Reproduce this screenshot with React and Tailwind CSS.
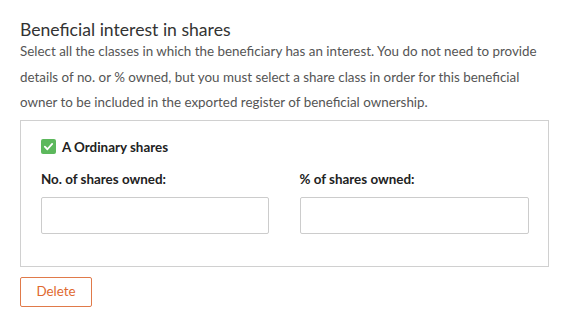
import { useState } from "react";

const App = () => {
  const [checked, setChecked] = useState(true);

  return (
    <div className="min-h-screen bg-white px-5 pt-[18px] font-['Lato',sans-serif] text-[#333]">
      <h2 className="text-[17.6px] leading-[24px] text-[#333]">Beneficial interest in shares</h2>
      <p className="-mt-[3px] text-[13.4px] leading-[25.5px] text-[#555] w-[520px]">
        Select all the classes in which the beneficiary has an interest. You do not need to provide
        details of no. or % owned, but you must select a share class in order for this beneficial
        owner to be included in the exported register of beneficial ownership.
      </p>

      <div className="mt-[4px] w-[529px] h-[147px] border border-[#d0d0d0] pl-5 pr-5 pt-[16px]">
        <label className="flex items-center gap-[6px] cursor-pointer">
          <button
            type="button"
            onClick={() => setChecked(!checked)}
            className="w-[15px] h-[15px] rounded-[2px] bg-[#5cb85c] flex items-center justify-center"
          >
            {checked && (
              <svg width="11" height="11" viewBox="0 0 12 12" fill="none">
                <path d="M2 6.2 L4.8 9 L10 3.2" stroke="white" strokeWidth="2" strokeLinecap="round" strokeLinejoin="round" />
              </svg>
            )}
          </button>
          <span className="text-[13.4px] font-bold text-[#222]">A Ordinary shares</span>
        </label>

        <div className="mt-[13px] grid grid-cols-2 gap-[30px]">
          <div>
            <div className="text-[13.4px] font-bold text-[#222] leading-[18px]">No. of shares owned:</div>
            <input className="mt-[9px] w-[228px] h-[37px] border border-[#ccc] rounded-[2px] px-2 outline-none" />
          </div>
          <div>
            <div className="text-[13.4px] font-bold text-[#222] leading-[18px]">% of shares owned:</div>
            <input className="mt-[9px] w-[229px] h-[37px] border border-[#ccc] rounded-[2px] px-2 outline-none" />
          </div>
        </div>
      </div>

      <button className="mt-[10px] w-[72px] h-[30px] border border-[#e07a4a] rounded-[2px] text-[#e0692f] text-[13.4px]">
        Delete
      </button>
    </div>
  );
};

export default App;
